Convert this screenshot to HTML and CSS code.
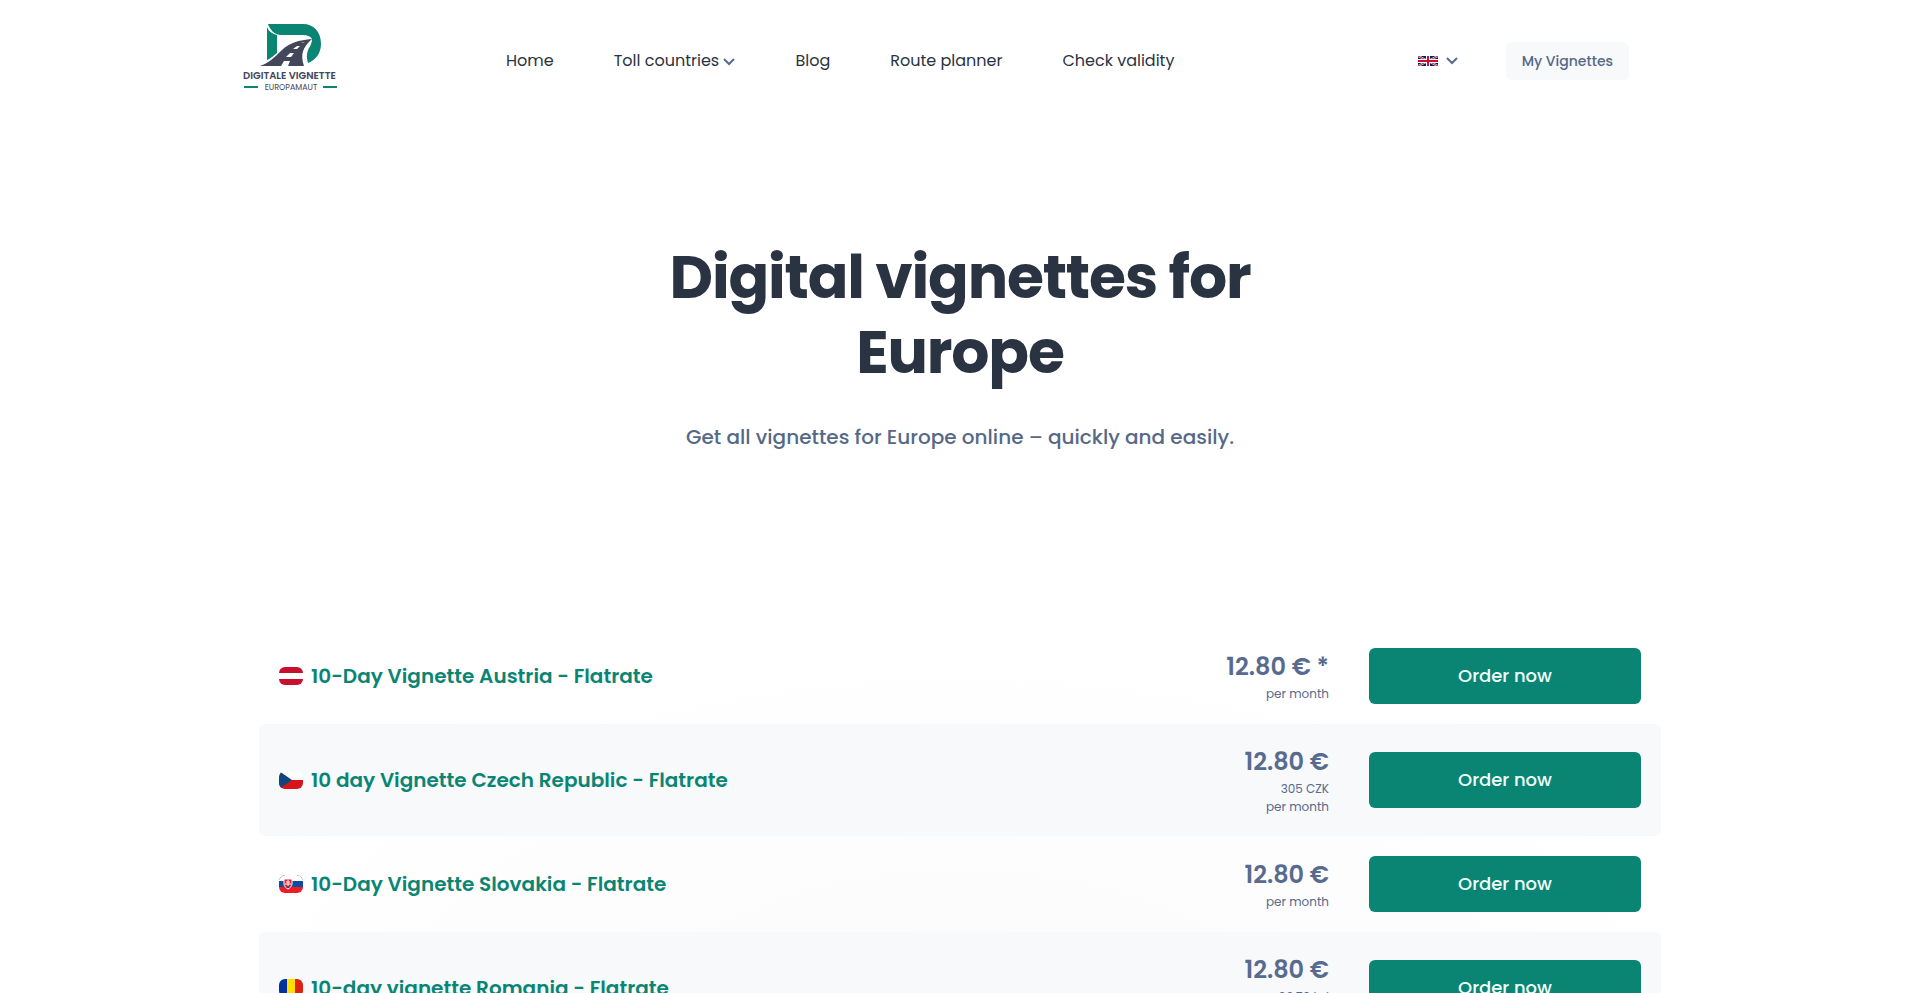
FILE: index.html
```html
<!DOCTYPE html>
<html lang="en">
<head>
    <meta charset="UTF-8">
    <meta name="viewport" content="width=device-width, initial-scale=1.0">
    <title>Digital vignettes for Europe</title>
    <link rel="stylesheet" href="styles.css">
</head>
<body>
    <header class="header">
        <a class="logo" href="#" aria-label="Digitale Vignette Europamaut">
            <svg viewBox="0 0 96 74" width="96" height="74">
                <path fill="#0b8573" d="M24 3c2 5 6 7 10 8v18c-4 3-7 6-10 7z"/>
                <path fill="#0b8573" d="M25 0h35c11 0 18 8 18 20 0 9-5 16-13 19-2-7-1-11 1-15 2-3 3-6 3-9-2-3-5-4-9-4H37C31 10 27 6 25 0z"/>
                <path fill="#444659" d="M17 42c9-3 15-9 22-16s17-10 30-11c-9 8-12 15-8 27z"/>
                <path fill="#fff" d="M38 42l3-5h6l-2 5zM43 33l4-4h4l-3 4zM50 25l4-3h3l-3 3zM58 19l4-1-2 1z"/>
                <text class="logo-name" x="0" y="55">DIGITALE VIGNETTE</text>
                <path stroke="#0b8573" stroke-width="2" d="M1 63h14M80 63h14"/>
                <text class="logo-sub" x="48" y="66">EUROPAMAUT</text>
            </svg>
        </a>
        <nav class="nav">
            <a href="#">Home</a>
            <a href="#">Toll countries
                <svg class="chevron" viewBox="0 0 12 8" width="12" height="8"><path d="M1 1l5 5 5-5"/></svg>
            </a>
            <a href="#">Blog</a>
            <a href="#">Route planner</a>
            <a href="#">Check validity</a>
        </nav>
        <div class="actions">
            <button class="language" type="button" aria-label="Language: English">
                <svg viewBox="0 0 20 10" width="20" height="10">
                    <path fill="#012169" d="M0 0h20v10H0z"/>
                    <path stroke="#fff" stroke-width="2" d="M0 0l20 10M20 0L0 10"/>
                    <path stroke="#c8102e" stroke-width="1" d="M0 0l20 10M20 0L0 10"/>
                    <path stroke="#fff" stroke-width="4" d="M10 0v10M0 5h20"/>
                    <path stroke="#c8102e" stroke-width="2" d="M10 0v10M0 5h20"/>
                </svg>
                <svg class="chevron" viewBox="0 0 12 8" width="12" height="8"><path d="M1 1l5 5 5-5"/></svg>
            </button>
            <a class="my-vignettes" href="#">My Vignettes</a>
        </div>
    </header>

    <main>
        <section class="hero">
            <h1>Digital vignettes for Europe</h1>
            <p>Get all vignettes for Europe online – quickly and easily.</p>
        </section>

        <div class="products-wrap">
            <ul class="products">
                <li class="product">
                    <a class="product-title" href="#">
                        <svg class="flag" viewBox="0 0 24 18"><path fill="#c8102e" d="M0 0h24v18H0z"/><path fill="#fff" d="M0 6h24v6H0z"/></svg>
                        10-Day Vignette Austria - Flatrate
                    </a>
                    <div class="price"><strong>12.80 € *</strong><span>per month</span></div>
                    <button class="order" type="button">Order now</button>
                </li>
                <li class="product">
                    <a class="product-title" href="#">
                        <svg class="flag" viewBox="0 0 24 18"><path fill="#fff" d="M0 0h24v9H0z"/><path fill="#d7141a" d="M0 9h24v9H0z"/><path fill="#11457e" d="M0 0l13 9-13 9z"/></svg>
                        10 day Vignette Czech Republic - Flatrate
                    </a>
                    <div class="price"><strong>12.80 €</strong><span>305 CZK</span><span>per month</span></div>
                    <button class="order" type="button">Order now</button>
                </li>
                <li class="product">
                    <a class="product-title" href="#">
                        <svg class="flag" viewBox="0 0 24 18">
                            <path fill="#fff" d="M0 0h24v6H0z"/><path fill="#0b4ea2" d="M0 6h24v6H0z"/><path fill="#ee1c25" d="M0 12h24v6H0z"/>
                            <path fill="#ee1c25" stroke="#fff" stroke-width="1" d="M5 4h8v5c0 2-2 4-4 5-2-1-4-3-4-5z"/>
                            <path stroke="#fff" stroke-width="1" d="M9 5v6M7 7h4M6 9h6"/>
                            <path fill="#0b4ea2" d="M7 12c1-1 3-1 4 0l-2 1z"/>
                            <path fill="none" stroke="#999" stroke-width="1" d="M0 5c1-3 3-5 6-5M18 0c3 0 5 2 6 5"/>
                        </svg>
                        10-Day Vignette Slovakia - Flatrate
                    </a>
                    <div class="price"><strong>12.80 €</strong><span>per month</span></div>
                    <button class="order" type="button">Order now</button>
                </li>
                <li class="product">
                    <a class="product-title" href="#">
                        <svg class="flag" viewBox="0 0 24 18"><path fill="#00319c" d="M0 0h8v18H0z"/><path fill="#ffde00" d="M8 0h8v18H8z"/><path fill="#de2110" d="M16 0h8v18h-8z"/></svg>
                        10-day vignette Romania - Flatrate
                    </a>
                    <div class="price"><strong>12.80 €</strong><span>66.70 Lei</span><span>per month</span></div>
                    <button class="order" type="button">Order now</button>
                </li>
            </ul>
        </div>
    </main>
</body>
</html>
```
FILE: styles.css
```css
* {
    box-sizing: border-box;
}
body {
    margin: 0;
    font-family: Poppins, Inter, "Open Sans", sans-serif;
    font-size: 16px;
    line-height: 24px;
    color: #2a3342;
    background-color: #ffffff;
    overflow-x: hidden;
}
a {
    color: inherit;
    text-decoration: none;
}
button {
    font-family: inherit;
    border: none;
    cursor: pointer;
}
.header {
    display: flex;
    align-items: center;
    max-width: 1434px;
    height: 122px;
    margin: 0 auto;
    padding-right: 48px;
}
.logo {
    width: 96px;
    margin-right: 167px;
}
.logo svg {
    display: block;
}
.logo-name {
    font-size: 10px;
    font-weight: 600;
    fill: #444659;
}
.logo-sub {
    font-size: 8px;
    font-weight: 400;
    fill: #444659;
    text-anchor: middle;
}
.nav {
    display: flex;
    gap: 60px;
    white-space: nowrap;
}
.chevron {
    fill: none;
    stroke: #586a8e;
    stroke-width: 2;
}
.actions {
    display: flex;
    align-items: center;
    gap: 48px;
    margin-left: auto;
}
.language {
    display: flex;
    align-items: center;
    gap: 8px;
    padding: 0;
    background: none;
}
.my-vignettes {
    padding: 7px 16px;
    border-radius: 6px;
    background-color: #f7f9fa;
    color: #556987;
    font-size: 14px;
    font-weight: 500;
}
.hero {
    max-width: 680px;
    margin: 0 auto;
    padding: 118px 16px 0;
    text-align: center;
}
.hero h1 {
    margin: 0 0 32px;
    font-size: 60px;
    line-height: 75px;
    font-weight: 700;
    letter-spacing: -0.02em;
}
.hero p {
    margin: 0;
    font-size: 20px;
    line-height: 30px;
    font-weight: 500;
    color: #556987;
}
.products-wrap {
    margin-top: 108px;
    padding: 68px 16px 0;
    background: radial-gradient(ellipse 800px 420px at 50% 100%, #fafafa, #ffffff);
}
.products {
    max-width: 1402px;
    margin: 0 auto;
    padding: 0;
    list-style: none;
}
.product {
    display: flex;
    align-items: center;
    gap: 40px;
    padding: 20px;
    border-radius: 6px;
}
.product:nth-child(even) {
    background-color: #f7f9fa;
}
.product-title {
    display: flex;
    flex: 1;
    align-items: center;
    gap: 8px;
    font-size: 20px;
    line-height: 30px;
    font-weight: 600;
    color: #0b8573;
}
.flag {
    width: 24px;
    height: 18px;
    border-radius: 6px;
}
.price {
    display: flex;
    flex-direction: column;
    text-align: right;
    font-size: 12px;
    line-height: 18px;
    color: #586a8e;
}
.price strong {
    font-size: 24px;
    line-height: 36px;
    font-weight: 600;
}
.order {
    width: 272px;
    height: 56px;
    padding: 0 0 2px;
    border-radius: 6px;
    background-color: #0b8573;
    color: #effdfa;
    font-size: 18px;
    font-weight: 500;
}
```
